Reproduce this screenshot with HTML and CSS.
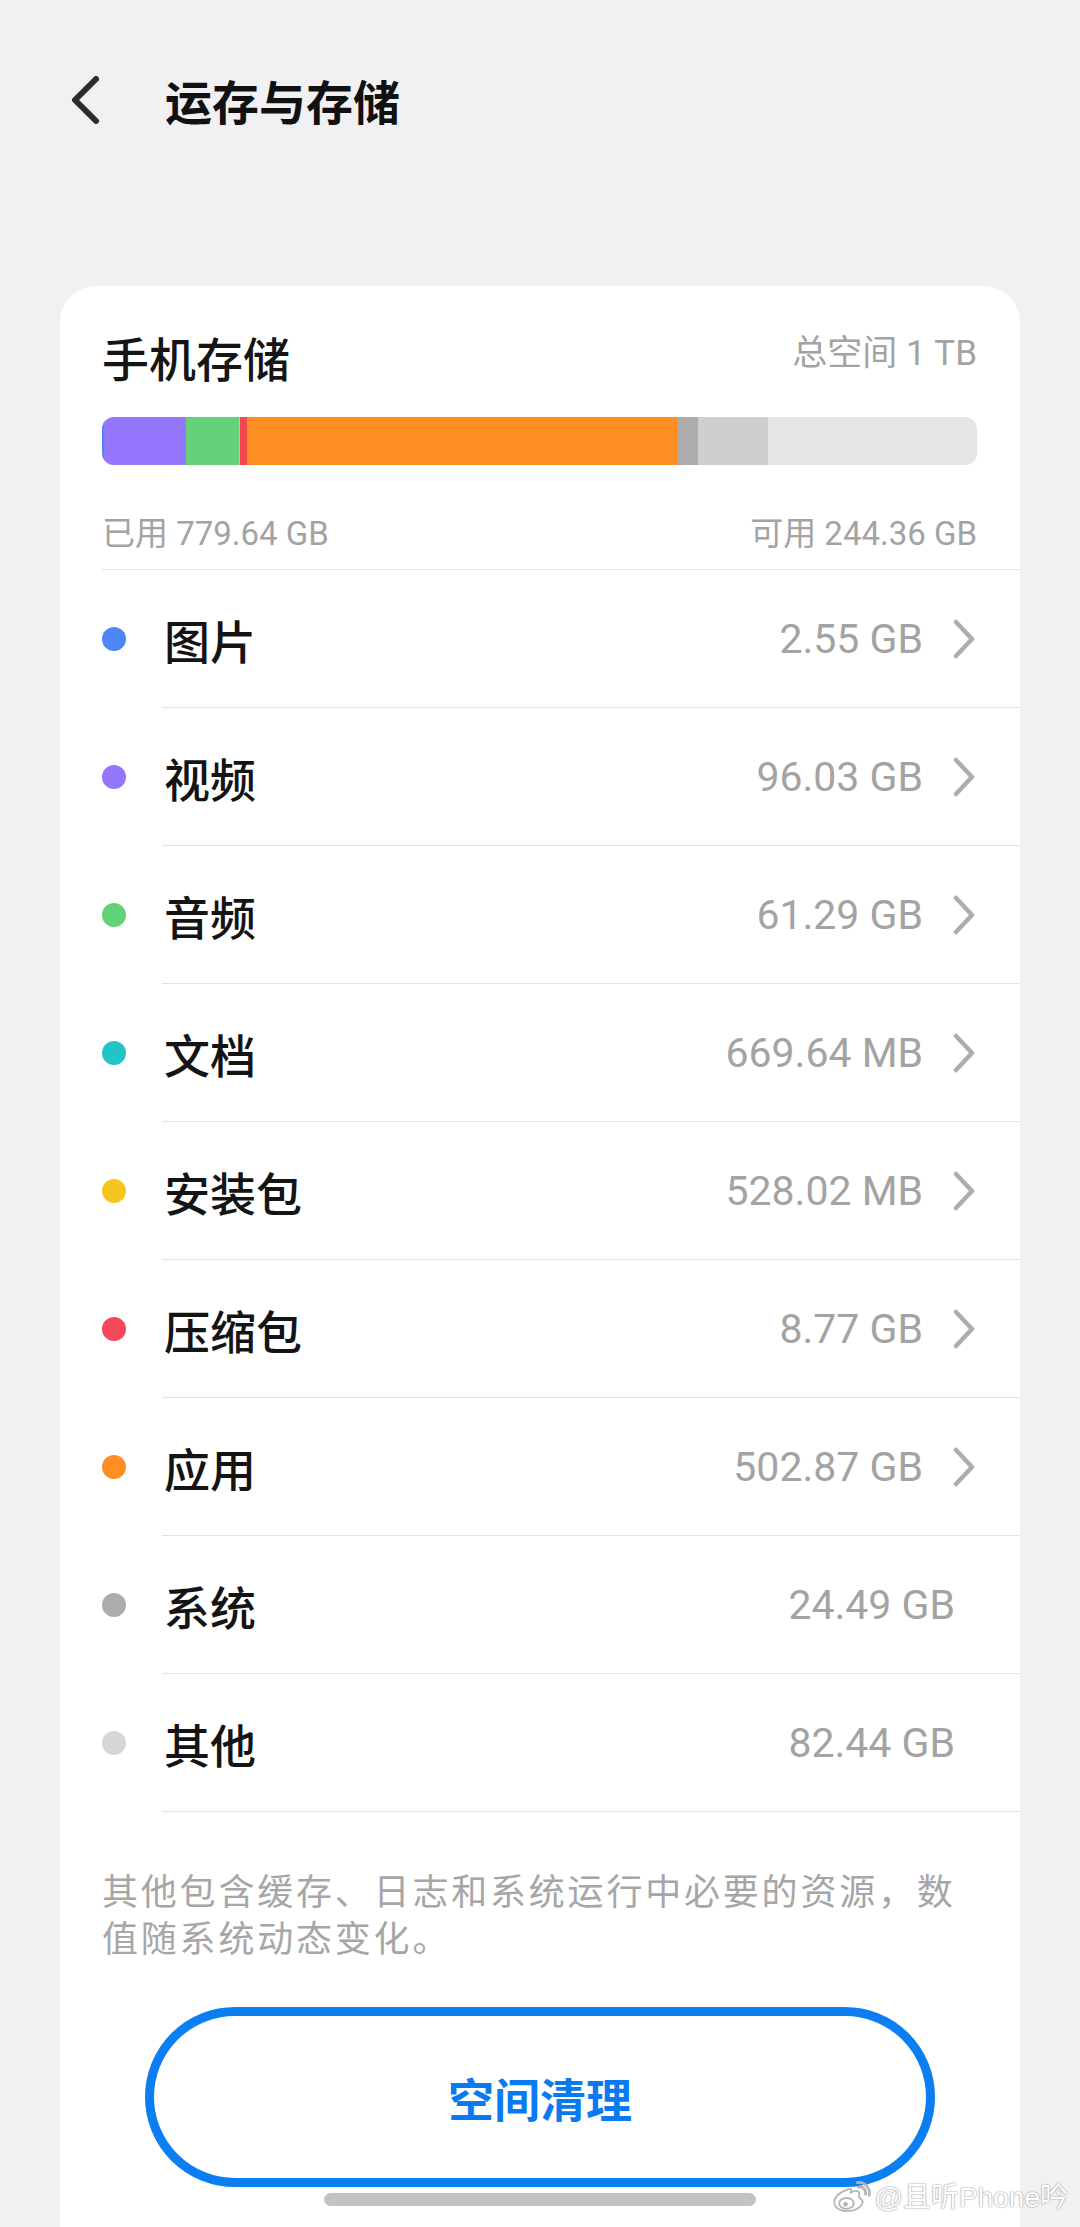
FILE: index.html
```html
<!DOCTYPE html>
<html lang="zh-CN">
<head>
<meta charset="utf-8">
<title>运存与存储</title>
<link rel="stylesheet" href="styles.css">
</head>
<body>
<div class="screen">
  <header class="topbar">
    <svg class="back" width="40" height="52" viewBox="0 0 40 52" aria-hidden="true">
      <path d="M30 5 L9 26 L30 47" fill="none" stroke="#2b2b2b" stroke-width="6" stroke-linecap="round" stroke-linejoin="round"/>
    </svg>
    <h1 class="page-title">运存与存储</h1>
  </header>

  <main class="card">
    <section class="summary">
      <div class="summary-head">
        <span class="summary-title">手机存储</span>
        <span class="summary-total">总空间 1 TB</span>
      </div>
      <div class="bar">
        <span class="seg seg-blue" style="width:0.249%"></span>
        <span class="seg seg-purple" style="width:9.378%"></span>
        <span class="seg seg-green" style="width:5.986%"></span>
        <span class="seg seg-cyan" style="width:0.064%"></span>
        <span class="seg seg-yellow" style="width:0.050%"></span>
        <span class="seg seg-red" style="width:0.857%"></span>
        <span class="seg seg-orange" style="width:49.110%"></span>
        <span class="seg seg-gray" style="width:2.392%"></span>
        <span class="seg seg-light" style="width:8.051%"></span>
      </div>
      <div class="usage">
        <span>已用 779.64 GB</span>
        <span>可用 244.36 GB</span>
      </div>
    </section>

    <ul class="list">
      <li class="row">
        <span class="dot-cell"><span class="dot dot-blue"></span></span>
        <div class="row-main">
          <span class="label">图片</span>
          <span class="value">2.55 GB</span>
          <svg class="arrow" width="26" height="40" viewBox="0 0 26 40" aria-hidden="true"><path d="M5 3 L21 20 L5 37" fill="none" stroke="#adadad" stroke-width="4.5" stroke-linecap="round" stroke-linejoin="round"/></svg>
        </div>
      </li>
      <li class="row">
        <span class="dot-cell"><span class="dot dot-purple"></span></span>
        <div class="row-main">
          <span class="label">视频</span>
          <span class="value">96.03 GB</span>
          <svg class="arrow" width="26" height="40" viewBox="0 0 26 40" aria-hidden="true"><path d="M5 3 L21 20 L5 37" fill="none" stroke="#adadad" stroke-width="4.5" stroke-linecap="round" stroke-linejoin="round"/></svg>
        </div>
      </li>
      <li class="row">
        <span class="dot-cell"><span class="dot dot-green"></span></span>
        <div class="row-main">
          <span class="label">音频</span>
          <span class="value">61.29 GB</span>
          <svg class="arrow" width="26" height="40" viewBox="0 0 26 40" aria-hidden="true"><path d="M5 3 L21 20 L5 37" fill="none" stroke="#adadad" stroke-width="4.5" stroke-linecap="round" stroke-linejoin="round"/></svg>
        </div>
      </li>
      <li class="row">
        <span class="dot-cell"><span class="dot dot-cyan"></span></span>
        <div class="row-main">
          <span class="label">文档</span>
          <span class="value">669.64 MB</span>
          <svg class="arrow" width="26" height="40" viewBox="0 0 26 40" aria-hidden="true"><path d="M5 3 L21 20 L5 37" fill="none" stroke="#adadad" stroke-width="4.5" stroke-linecap="round" stroke-linejoin="round"/></svg>
        </div>
      </li>
      <li class="row">
        <span class="dot-cell"><span class="dot dot-yellow"></span></span>
        <div class="row-main">
          <span class="label">安装包</span>
          <span class="value">528.02 MB</span>
          <svg class="arrow" width="26" height="40" viewBox="0 0 26 40" aria-hidden="true"><path d="M5 3 L21 20 L5 37" fill="none" stroke="#adadad" stroke-width="4.5" stroke-linecap="round" stroke-linejoin="round"/></svg>
        </div>
      </li>
      <li class="row">
        <span class="dot-cell"><span class="dot dot-red"></span></span>
        <div class="row-main">
          <span class="label">压缩包</span>
          <span class="value">8.77 GB</span>
          <svg class="arrow" width="26" height="40" viewBox="0 0 26 40" aria-hidden="true"><path d="M5 3 L21 20 L5 37" fill="none" stroke="#adadad" stroke-width="4.5" stroke-linecap="round" stroke-linejoin="round"/></svg>
        </div>
      </li>
      <li class="row">
        <span class="dot-cell"><span class="dot dot-orange"></span></span>
        <div class="row-main">
          <span class="label">应用</span>
          <span class="value">502.87 GB</span>
          <svg class="arrow" width="26" height="40" viewBox="0 0 26 40" aria-hidden="true"><path d="M5 3 L21 20 L5 37" fill="none" stroke="#adadad" stroke-width="4.5" stroke-linecap="round" stroke-linejoin="round"/></svg>
        </div>
      </li>
      <li class="row">
        <span class="dot-cell"><span class="dot dot-gray"></span></span>
        <div class="row-main no-arrow">
          <span class="label">系统</span>
          <span class="value">24.49 GB</span>
        </div>
      </li>
      <li class="row">
        <span class="dot-cell"><span class="dot dot-light"></span></span>
        <div class="row-main no-arrow">
          <span class="label">其他</span>
          <span class="value">82.44 GB</span>
        </div>
      </li>
    </ul>

    <p class="note">其他包含缓存、日志和系统运行中必要的资源，数值随系统动态变化。</p>

    <button class="clean-btn" type="button">空间清理</button>
  </main>

  <div class="home-indicator"></div>

  <div class="watermark">
    <svg class="weibo" width="40" height="34" viewBox="0 0 44 36" aria-hidden="true">
      <path d="M17 9 C8 12 2 19 4 25 C6 32 17 34 26 31 C34 28 37 22 33 19 C31 18 30 17 31 14 C32 10 27 9 22 12 C23 8 21 7 17 9 Z" fill="#ffffff" stroke="#b5b5b5" stroke-width="2"/>
      <ellipse cx="17" cy="24" rx="8" ry="6" fill="none" stroke="#b5b5b5" stroke-width="2"/>
      <circle cx="16" cy="25" r="2.5" fill="#b5b5b5"/>
      <path d="M30 6 C35 5 39 9 38 14" fill="none" stroke="#b5b5b5" stroke-width="3" stroke-linecap="round"/>
      <path d="M29 1 C37 0 44 7 42 15" fill="none" stroke="#b5b5b5" stroke-width="3" stroke-linecap="round"/>
    </svg>
    <span class="wm-text">@且听Phone吟</span>
  </div>
</div>
</body>
</html>
```

FILE: styles.css
```css
* {
  box-sizing: border-box;
}

html, body {
  margin: 0;
  padding: 0;
}

body {
  background: #f1f1f3;
  font-family: "Noto Sans CJK SC", "Noto Sans", sans-serif;
  color: #111111;
}

.screen {
  position: relative;
  width: 1080px;
  height: 2227px;
  overflow: hidden;
  display: flex;
  flex-direction: column;
}

/* Top bar */
.topbar {
  height: 200px;
  display: flex;
  align-items: center;
  padding-left: 66px;
}

.back {
  display: block;
  flex: none;
}

.page-title {
  margin: 0 0 0 59px;
  font-size: 47px;
  font-weight: 600;
  line-height: 60px;
  color: #111111;
  letter-spacing: 0;
}

/* Card */
.card {
  flex: 1;
  margin: 86px 60px 0;
  background: #ffffff;
  border-radius: 36px 36px 0 0;
  display: flex;
  flex-direction: column;
}

.summary {
  margin-left: 42px;
  padding: 41px 43px 15px 0;
  border-bottom: 1px solid #e2e2e2;
}

.summary-head {
  display: flex;
  justify-content: space-between;
  align-items: center;
  height: 60px;
}

.summary-title {
  font-size: 47px;
  font-weight: 500;
  color: #151515;
  line-height: 60px;
}

.summary-total {
  font-family: "Roboto", "Noto Sans CJK SC", sans-serif;
  font-size: 35px;
  color: #a3a3a3;
  line-height: 40px;
  margin-top: -6px;
}

.bar {
  margin-top: 30px;
  height: 48px;
  border-radius: 12px;
  overflow: hidden;
  background: #e5e5e5;
  display: flex;
}

.seg {
  display: block;
  height: 100%;
  flex: none;
}

.seg-blue { background: #4f86f7; }
.seg-purple { background: #9477fc; }
.seg-green { background: #63d07a; }
.seg-cyan { background: #24c4c6; }
.seg-yellow { background: #f8c81c; }
.seg-red { background: #f5474f; }
.seg-orange { background: #fe8d22; }
.seg-gray { background: #acacac; }
.seg-light { background: #cfcfcf; }

.usage {
  margin-top: 49px;
  display: flex;
  justify-content: space-between;
  font-family: "Roboto", "Noto Sans CJK SC", sans-serif;
  font-size: 33px;
  line-height: 40px;
  color: #a3a3a3;
}

/* List */
.list {
  list-style: none;
  margin: 0;
  padding: 0;
}

.row {
  display: flex;
  height: 138px;
}

.dot-cell {
  width: 102px;
  flex: none;
  display: flex;
  align-items: center;
  padding-left: 42px;
}

.dot {
  width: 24px;
  height: 24px;
  border-radius: 50%;
  display: block;
}

.dot-blue { background: #4f86f7; }
.dot-purple { background: #9477fc; }
.dot-green { background: #63d07a; }
.dot-cyan { background: #24c4c6; }
.dot-yellow { background: #f8c51c; }
.dot-red { background: #f5475a; }
.dot-orange { background: #fe8d22; }
.dot-gray { background: #acacac; }
.dot-light { background: #d6d6d6; }

.row-main {
  flex: 1;
  display: flex;
  align-items: center;
  border-bottom: 1px solid #e2e2e2;
  padding-right: 43px;
}

.row-main.no-arrow {
  padding-right: 65px;
}

.label {
  flex: 1;
  font-size: 46px;
  font-weight: 500;
  color: #141414;
  line-height: 60px;
  padding-left: 2px;
}

.value {
  font-family: "Roboto", "Noto Sans", sans-serif;
  font-size: 41px;
  color: #a3a3a3;
  line-height: 60px;
}

.arrow {
  display: block;
  flex: none;
  margin-left: 28px;
}

/* Note */
.note {
  margin: 54px 43px 0 42px;
  font-size: 36px;
  letter-spacing: 2.8px;
  line-height: 47px;
  color: #a6a6a6;
}

/* Button */
.clean-btn {
  margin: 47px auto 0;
  width: 790px;
  height: 180px;
  border: 9px solid #0b7ff2;
  border-radius: 90px;
  background: #ffffff;
  color: #0a7af0;
  font-family: "Noto Sans CJK SC", sans-serif;
  font-size: 46px;
  font-weight: 700;
  padding: 0;
}

/* Overlays */
.home-indicator {
  position: absolute;
  left: 324px;
  bottom: 21px;
  width: 432px;
  height: 13px;
  border-radius: 7px;
  background: #c2c2c2;
}

.watermark {
  position: absolute;
  right: 12px;
  bottom: 12px;
  display: flex;
  align-items: center;
  gap: 4px;
}

.weibo {
  display: block;
}

.wm-text {
  font-family: "Liberation Sans", "Noto Sans CJK SC", sans-serif;
  font-size: 28px;
  line-height: 34px;
  color: #ffffff;
  text-shadow: 0 0 2px #9a9a9a, 0 0 1px #9a9a9a;
}
```
